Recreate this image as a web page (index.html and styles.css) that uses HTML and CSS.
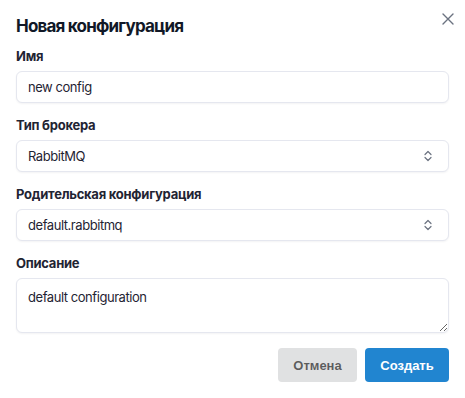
FILE: index.html
```html
<!DOCTYPE html>
<html lang="ru">
<head>
<meta charset="utf-8">
<link rel="stylesheet" href="styles.css">
</head>
<body>
<div class="modal">
  <button class="close" aria-label="Закрыть">
    <svg width="12" height="12" viewBox="0 0 12 12"><path d="M1 1L11 11M11 1L1 11" stroke="#6b7280" stroke-width="1.4" fill="none" stroke-linecap="round"/></svg>
  </button>
  <h1 class="title">Новая конфигурация</h1>
  <form class="form">
    <div class="field">
      <label class="label">Имя</label>
      <div class="input"><span>new config</span></div>
    </div>
    <div class="field">
      <label class="label">Тип брокера</label>
      <div class="input select"><span>RabbitMQ</span>
        <svg class="chev" width="8" height="12" viewBox="0 0 8 12"><path d="M1 4.5L4 1.5L7 4.5M1 7.5L4 10.5L7 7.5" stroke="#6b7280" stroke-width="1.2" fill="none" stroke-linecap="round" stroke-linejoin="round"/></svg>
      </div>
    </div>
    <div class="field">
      <label class="label">Родительская конфигурация</label>
      <div class="input select"><span>default.rabbitmq</span>
        <svg class="chev" width="8" height="12" viewBox="0 0 8 12"><path d="M1 4.5L4 1.5L7 4.5M1 7.5L4 10.5L7 7.5" stroke="#6b7280" stroke-width="1.2" fill="none" stroke-linecap="round" stroke-linejoin="round"/></svg>
      </div>
    </div>
    <div class="field">
      <label class="label">Описание</label>
      <textarea class="input textarea">default configuration</textarea>
    </div>
    <div class="actions">
      <button type="button" class="btn cancel">Отмена</button>
      <button type="button" class="btn primary">Создать</button>
    </div>
  </form>
</div>
</body>
</html>
```
FILE: styles.css
```css
* { box-sizing: border-box; }
html, body { margin: 0; background: #fff; }
body { font-family: Inter, "Noto Sans", sans-serif; color: #111827; }
.modal { position: relative; padding: 14px 16px 16px; }
.close { position: absolute; top: 12px; right: 10px; width: 14px; height: 14px; padding: 0; border: 0; background: none; display: flex; align-items: center; justify-content: center; }
.title { margin: 0; font-size: 17px; line-height: 24px; font-weight: 700; letter-spacing: -0.8px; color: #111827; }
.form { margin-top: 10px; display: flex; flex-direction: column; gap: 14px; }
.field { display: flex; flex-direction: column; gap: 6px; }
.label { font-size: 13px; line-height: 17px; font-weight: 700; letter-spacing: -0.25px; color: #1f2433; }
.input { height: 32px; border: 1px solid #e5e7ef; border-radius: 6px; box-shadow: 0 1px 2px rgba(16,24,40,0.05); padding: 0 11px; display: flex; align-items: center; font-size: 13px; letter-spacing: -0.45px; color: #1f2433; font-family: Inter, sans-serif; background: #fff; }
.select { justify-content: space-between; padding-right: 16px; }
.chev { display: block; }
.textarea { height: 55px; display: block; width: 100%; padding: 9px 11px; line-height: 18px; resize: vertical; outline: none; }
.actions { margin-top: 1px; display: flex; justify-content: flex-end; gap: 8px; }
.btn { height: 34px; border: 0; border-radius: 4px; font-family: "Liberation Sans", Arial, sans-serif; font-weight: 700; font-size: 13px; padding: 0; }
.cancel { background: #e0e1e2; color: rgba(0,0,0,0.6); width: 79px; }
.primary { background: #2185d0; color: #fff; width: 84px; }
```
